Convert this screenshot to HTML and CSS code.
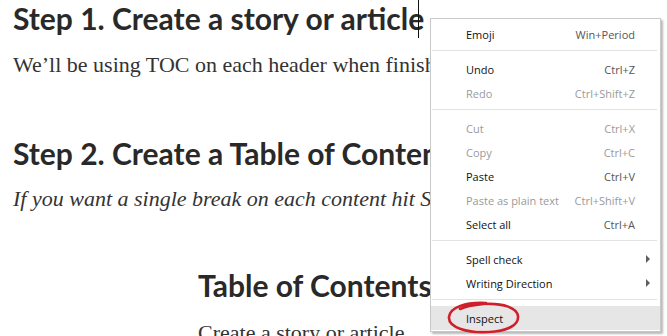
FILE: index.html
```html
<!DOCTYPE html>
<html lang="en">
<head>
    <meta charset="UTF-8">
    <title>Table of Contents</title>
    <link rel="stylesheet" href="styles.css">
</head>
<body>
    <div class="article">
        <h1 class="step">Step 1. Create a story or article</h1>
        <p class="body-text">We’ll be using TOC on each header when finished writing the story.</p>

        <h2 class="step step-two">Step 2. Create a Table of Contents</h2>
        <p class="body-text note">If you want a single break on each content hit Shift + Enter.</p>

        <div class="toc">
            <h3 class="step">Table of Contents</h3>
            <p class="body-text">Create a story or article</p>
        </div>
    </div>

    <span class="caret"></span>

    <!-- right click menu -->
    <ul class="menu">
        <li class="item"><span>Emoji</span><span class="key">Win+Period</span></li>
        <li class="sep"></li>
        <li class="item"><span>Undo</span><span class="key">Ctrl+Z</span></li>
        <li class="item off"><span>Redo</span><span class="key">Ctrl+Shift+Z</span></li>
        <li class="sep"></li>
        <li class="item off"><span>Cut</span><span class="key">Ctrl+X</span></li>
        <li class="item off"><span>Copy</span><span class="key">Ctrl+C</span></li>
        <li class="item"><span>Paste</span><span class="key">Ctrl+V</span></li>
        <li class="item off"><span>Paste as plain text</span><span class="key">Ctrl+Shift+V</span></li>
        <li class="item"><span>Select all</span><span class="key">Ctrl+A</span></li>
        <li class="sep"></li>
        <li class="item sub"><span>Spell check</span><span class="arrow"></span></li>
        <li class="item sub"><span>Writing Direction</span><span class="arrow"></span></li>
        <li class="sep"></li>
        <li class="item hover"><span>Inspect</span></li>
    </ul>

    <svg class="circle" width="76" height="36" viewBox="0 0 76 36">
        <path d="M40 3 C 20 2, 4 7, 3 17 C 2 28, 22 33, 42 32 C 62 31, 73 25, 72 16 C 71 8, 58 3, 38 4 C 28 5, 18 7, 14 9"
              fill="none" stroke="#cf1f2b" stroke-width="2.6" stroke-linecap="round"/>
    </svg>
</body>
</html>
```

FILE: styles.css
```css
html, body {
    margin: 0;
    padding: 0;
}
body {
    background-color: #fff;
    width: 667px;
    height: 336px;
    overflow: hidden;
    position: relative;
}
.article {
    padding-left: 13px;
    white-space: nowrap;
}
.step {
    font-family: Lato, "Open Sans", sans-serif;
    font-weight: 700;
    font-size: 30px;
    line-height: 36px;
    color: #292929;
    margin: 0;
}
.body-text {
    font-family: "Liberation Serif", "Times New Roman", serif;
    font-size: 22px;
    line-height: 30px;
    color: #333;
    margin: 14px 0 0;
}
.step-two {
    margin-top: 55px;
}
.note {
    font-style: italic;
    margin-top: 13px;
}
.toc {
    padding-left: 185px;
    margin-top: 53px;
}
.toc .body-text {
    margin-top: 15px;
}
.caret {
    position: absolute;
    left: 418px;
    top: 0;
    width: 1px;
    height: 38px;
    background-color: #111;
}

/* context menu */
.menu {
    position: absolute;
    left: 430px;
    top: 18px;
    width: 231px;
    box-sizing: border-box;
    margin: 0;
    padding: 3px 0 1px;
    list-style: none;
    background-color: #fff;
    border: 1px solid #c8c8c8;
    box-shadow: 2px 2px 2px rgba(0, 0, 0, 0.28);
    font-family: "Open Sans", "Noto Sans", sans-serif;
    font-size: 11px;
    color: #111;
}
.item {
    display: flex;
    justify-content: space-between;
    align-items: center;
    height: 24px;
    padding: 0 25px 0 35px;
}
.key {
    color: #555;
}
.off, .off .key {
    color: #9a9a9a;
}
.sep {
    height: 1px;
    margin: 4px 3px 6px 1px;
    background-color: #e3e3e3;
}
.sub {
    padding-right: 10px;
}
.arrow {
    width: 0;
    height: 0;
    border-left: 4px solid #5e5e5e;
    border-top: 4px solid transparent;
    border-bottom: 4px solid transparent;
}
.hover {
    background-color: #e6e6e6;
}
.circle {
    position: absolute;
    left: 446px;
    top: 300px;
}
```
